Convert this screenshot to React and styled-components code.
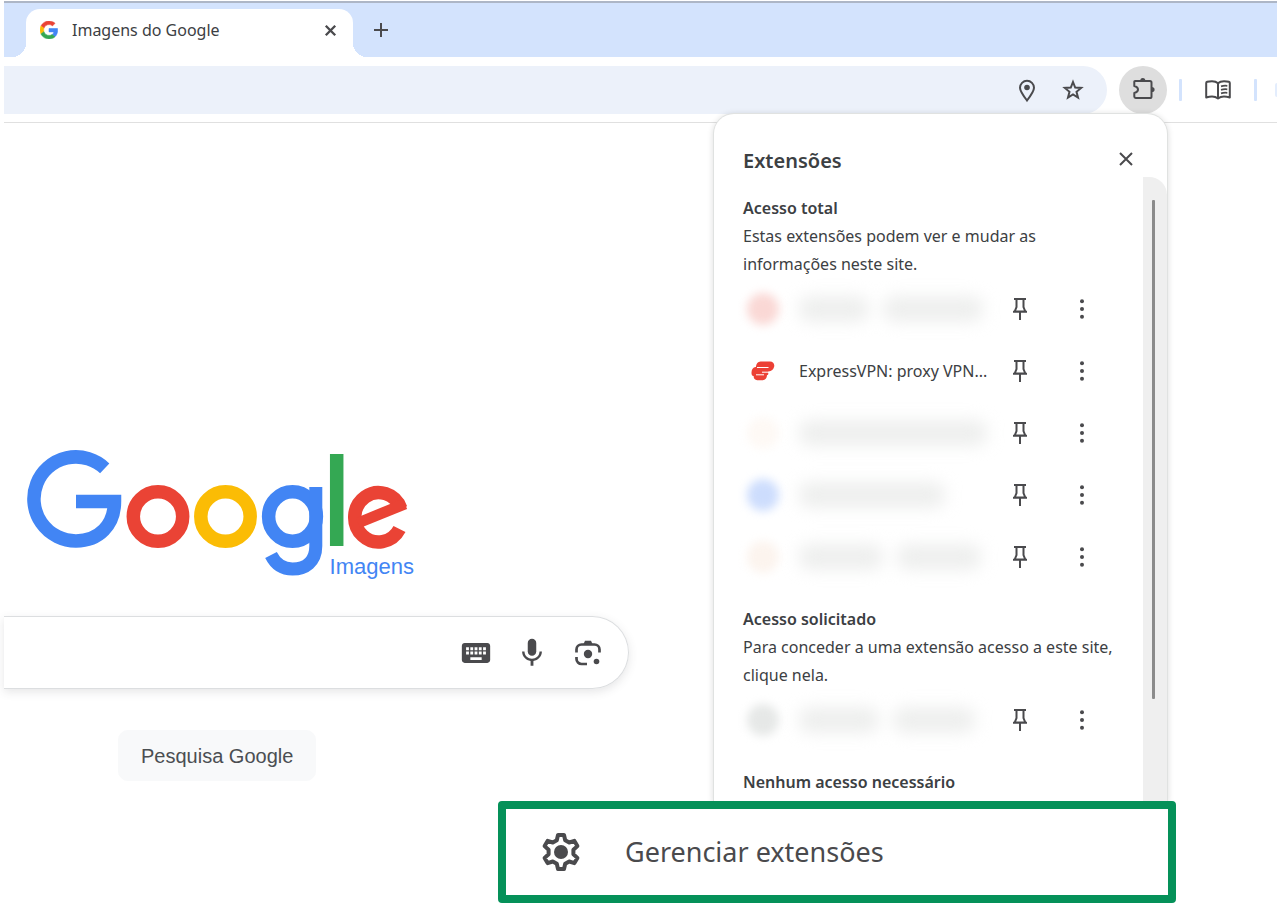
import React from "react";
import styled, { createGlobalStyle } from "styled-components";

const GlobalStyle = createGlobalStyle`
  *, *::before, *::after { box-sizing: border-box; }
  body {
    margin: 0;
    background: #fff;
    color: #3c4043;
    font-family: "Noto Sans", "Open Sans", sans-serif;
    font-size: 16px;
    line-height: 28px;
  }
  button, input { font: inherit; color: inherit; }
  h1, h2, p, ul { margin: 0; padding: 0; }
`;

const Browser = styled.div`
  min-height: 100vh;
  padding: 1px 4px 0;
`;

const TabStrip = styled.div`
  display: flex;
  align-items: center;
  height: 56px;
  padding: 6px 0 0 22px;
  border-top: 2px solid #adb6c6;
  background: #d3e3fd;
`;

const Tab = styled.div`
  position: relative;
  display: flex;
  align-items: center;
  gap: 14px;
  width: 327px;
  height: 48px;
  padding: 0 11px 6px 14px;
  border-radius: 14px 14px 0 0;
  background: #fff;

  &::before,
  &::after {
    content: "";
    position: absolute;
    bottom: 0;
    width: 14px;
    height: 14px;
  }
  &::before {
    right: 100%;
    background: radial-gradient(circle at 0 0, transparent 14px, #fff 14px);
  }
  &::after {
    left: 100%;
    background: radial-gradient(circle at 100% 0, transparent 14px, #fff 14px);
  }
`;

const TabTitle = styled.span`
  flex: 1;
  white-space: nowrap;
`;

const IconButton = styled.button`
  display: flex;
  flex: none;
  align-items: center;
  justify-content: center;
  width: ${(p) => p.$size || 24}px;
  height: ${(p) => p.$size || 24}px;
  padding: 0;
  border: 0;
  border-radius: 50%;
  background: ${(p) => (p.$active ? "#dedede" : "transparent")};
  color: #4a4a4d;

  svg { display: block; overflow: visible; }
`;

const NewTab = styled(IconButton)`
  margin: 0 0 6px 16px;
`;

const Toolbar = styled.div`
  display: flex;
  align-items: center;
  gap: 12px;
  height: 66px;
  padding-top: 1px;
  border-bottom: 1px solid #e0e0e0;
`;

const Omnibox = styled.div`
  display: flex;
  flex: 1;
  align-items: center;
  gap: 22px;
  height: 48px;
  padding-right: 22px;
  border-radius: 0 24px 24px 0;
  background: #ecf1fa;
`;

const BareInput = styled.input`
  flex: 1;
  min-width: 0;
  height: 40px;
  padding: 0 16px;
  border: 0;
  outline: 0;
  background: transparent;
`;

const Divider = styled.span`
  width: 3px;
  height: 22px;
  border-radius: 1px;
  background: #d3e3fd;
`;

const ProfileEdge = styled.span`
  width: 2px;
  height: 14px;
  margin-left: 6px;
  border-radius: 2px 0 0 2px;
  background: #e3edfd;
`;

const MenuAnchor = styled.div`
  position: relative;
`;

const Panel = styled.section`
  position: absolute;
  z-index: 2;
  top: 100%;
  right: 0;
  width: 453px;
  border-radius: 20px 20px 0 0;
  background: #fff;
  box-shadow: 0 0 0 1px #e0e2e1, 0 1px 6px 1px rgba(0, 0, 0, 0.14);
`;

const PanelHeader = styled.header`
  display: flex;
  align-items: flex-start;
  justify-content: space-between;
  height: 63px;
  padding: 33px 29px 0;
`;

const PanelTitle = styled.h1`
  font-size: 20px;
  font-weight: 600;
`;

const PanelBody = styled.div`
  display: flex;
`;

const Sections = styled.div`
  display: flex;
  flex: 1;
  flex-direction: column;
  gap: 17px;
  padding: 17px 29px 5px;
`;

const SectionTitle = styled.h2`
  font-size: 16px;
  font-weight: 600;
`;

const Description = styled.p`
  max-width: ${(p) => (p.$narrow ? "320px" : "none")};
`;

const Rows = styled.ul`
  list-style: none;
`;

const Row = styled.li`
  display: flex;
  align-items: center;
  height: 62px;
  padding: 0 8px;
`;

const RowName = styled.span`
  flex: 1;
  margin-left: 24px;
  white-space: nowrap;
`;

const RowActions = styled.div`
  display: flex;
  gap: 14px;
`;

const HiddenIcon = styled.span`
  width: 32px;
  height: 32px;
  margin: 0 -4px;
  border-radius: 50%;
  background: ${(p) => p.$color};
  filter: blur(5px);
`;

const HiddenName = styled.span`
  display: flex;
  flex: 1;
  gap: 14px;
  margin-left: 24px;
  filter: blur(8px);
`;

const HiddenWord = styled.span`
  width: ${(p) => p.$width}px;
  height: 26px;
  border-radius: 11px;
  background: #eeefee;
`;

const ScrollTrack = styled.div`
  width: 24px;
  padding: 23px 12px 0 9px;
  border-radius: 0 18px 0 0;
  background: #efefef;
`;

const ScrollThumb = styled.div`
  height: 499px;
  border-radius: 1px;
  background: #8b8b8b;
`;

const ManageButton = styled.button`
  position: absolute;
  top: 100%;
  right: -9px;
  display: flex;
  align-items: center;
  gap: 45px;
  width: 678px;
  height: 102px;
  padding: 0 36px;
  border: 8px solid #059159;
  border-radius: 4px;
  background: #fff;
  color: #4a4a4d;
  font-size: 27px;
  text-align: left;
`;

const Page = styled.main`
  display: flex;
  flex-direction: column;
  align-items: flex-start;
  max-width: 625px;
  padding-top: 327px;
`;

const Logo = styled.div`
  position: relative;
  margin-left: 22px;
  height: 130px;
  width: 388px;

  svg { display: block; overflow: visible; }
`;

const LogoCaption = styled.span`
  position: absolute;
  right: 0;
  bottom: 0;
  color: #4285f4;
  font: 22px/26px "Liberation Sans", Arial, sans-serif;
`;

const SearchBox = styled.form`
  display: flex;
  align-items: center;
  gap: 22px;
  width: 100%;
  height: 73px;
  margin-top: 36px;
  padding-right: 23px;
  border: 1px solid #dcdee0;
  border-left: 0;
  border-radius: 0 37px 37px 0;
  box-shadow: 0 3px 10px rgba(60, 64, 67, 0.13);
`;

const SearchButton = styled.button`
  height: 51px;
  margin: 41px 0 0 114px;
  padding: 0 22px;
  border: 1px solid #f8f9fa;
  border-radius: 10px;
  background: #f8f9fa;
  color: #4b4e52;
  font: 20px/24px "Liberation Sans", Arial, sans-serif;
`;

const stroke = (width) => ({
  fill: "none",
  stroke: "currentColor",
  strokeWidth: width,
});

const GoogleMark = () => (
  <svg width="18" height="18" viewBox="0 0 48 48" aria-hidden="true">
    <path fill="#EA4335" stroke="#EA4335" strokeWidth="1.5" d="M24 9.5c3.54 0 6.71 1.22 9.21 3.6l6.85-6.85C35.9 2.38 30.47 0 24 0 14.62 0 6.51 5.38 2.56 13.22l7.98 6.19C12.43 13.72 17.74 9.5 24 9.5z" />
    <path fill="#4285F4" stroke="#4285F4" strokeWidth="1.5" d="M46.98 24.55c0-1.57-.15-3.09-.38-4.55H24v9.02h12.94c-.58 2.96-2.26 5.48-4.78 7.18l7.73 6c4.51-4.18 7.09-10.36 7.09-17.65z" />
    <path fill="#FBBC05" stroke="#FBBC05" strokeWidth="1.5" d="M10.53 28.59c-.48-1.45-.76-2.99-.76-4.59s.27-3.14.76-4.59l-7.98-6.19C.92 16.46 0 20.12 0 24c0 3.88.92 7.54 2.56 10.78l7.97-6.19z" />
    <path fill="#34A853" stroke="#34A853" strokeWidth="1.5" d="M24 48c6.48 0 11.93-2.13 15.89-5.81l-7.73-6c-2.15 1.45-4.92 2.3-8.16 2.3-6.26 0-11.57-4.22-13.47-9.91l-7.98 6.19C6.51 42.62 14.62 48 24 48z" />
  </svg>
);

const CrossIcon = ({ size, width }) => (
  <svg width={size} height={size} viewBox="0 0 14 14" {...stroke(width)} aria-hidden="true">
    <path d="M1 1l12 12M13 1L1 13" />
  </svg>
);

const PlusIcon = () => (
  <svg width="14" height="14" viewBox="0 0 14 14" {...stroke(2)} aria-hidden="true">
    <path d="M7 0v14M0 7h14" />
  </svg>
);

const PlaceIcon = () => (
  <svg width="24" height="24" viewBox="0 0 24 24" {...stroke(2)} aria-hidden="true">
    <path d="M12 22.500C8.500 18 5 13.500 5 9.800a7 7 0 0 1 14 0C19 13.500 15.500 18 12 22.500z" />
    <circle cx="12" cy="9.500" r="2.800" fill="currentColor" stroke="none" />
  </svg>
);

const StarIcon = () => (
  <svg width="24" height="24" viewBox="0 0 24 24" {...stroke(2)} aria-hidden="true">
    <path d="M12 4l2.200 5.500 6 .4-4.700 3.900 1.500 5.800-5-3.200-5 3.200 1.500-5.800-4.700-3.900 6-.4z" />
  </svg>
);

const PuzzleIcon = () => (
  <svg width="24" height="24" viewBox="0 0 24 24" {...stroke(2)} aria-hidden="true">
    <path d="M4 3h14.900a1.600 1.600 0 0 1 1.600 1.600v13.800a1.600 1.600 0 0 1-1.600 1.600H4.700a1.400 1.400 0 0 1-1.400-1.400v-3.600c2.600-.6 3.700-1.800 3.700-3.500S5.900 8.600 3.300 8V3.700A.7.7 0 0 1 4 3z" strokeLinejoin="round" />
    <path d="M9.200 3a2.600 3 0 0 1 5.200 0zM20.600 8.900a3 2.600 0 0 1 0 5.200z" fill="currentColor" stroke="none" />
  </svg>
);

const ReaderIcon = () => (
  <svg width="26" height="20" viewBox="0 0 26 20" {...stroke(2)} aria-hidden="true">
    <path d="M13 3.200C11.500 1.800 9.500 1.200 7 1.200c-2 0-3.500.1-4.800.5-.7.200-1 .6-1 1.300v14.500C3 17 5 16.600 7 16.600c2.300 0 4.300.6 6 1.900 1.700-1.300 3.700-1.900 6-1.900 2 0 4 .4 5.800.9V3c0-.7-.3-1.100-1-1.300-1.300-.4-2.800-.5-4.800-.5-2.500 0-4.500.6-6 2z" strokeLinejoin="round" />
    <path d="M13 3v15" />
    <path d="M16 6.300c2-.6 4-.7 6.300-.5M16 9.800c2-.6 4-.7 6.300-.5M16 13.300c2-.6 4-.7 6.300-.5" strokeWidth="1.800" />
  </svg>
);

const PinIcon = () => (
  <svg width="14" height="22" viewBox="0 0 14 22" {...stroke(2)} aria-hidden="true">
    <path d="M1 1h12M3.500 1v8L1.700 13.500h10.600L10.500 9V1M0 13.800h14M7 13.500v8.500" />
  </svg>
);

const DotsIcon = () => (
  <svg width="6" height="20" viewBox="0 0 6 20" fill="currentColor" aria-hidden="true">
    <circle cx="3" cy="2.300" r="2" />
    <circle cx="3" cy="10" r="2" />
    <circle cx="3" cy="17.700" r="2" />
  </svg>
);

const ExpressIcon = () => (
  <svg width="24" height="24" viewBox="0 0 24 24" aria-hidden="true">
    <path fill="#ec4035" d="M9.500 2.500h9.500c3 0 4.700 2.200 4.200 5-.6 2.900-2.700 4.900-5.700 4.900l-.6 1.900h.6c-.2 1.300-.6 2-1.600 2h.1c-.1 2.800-1.700 4.900-4.300 4.900H6.200c-2.500 0-3.800-1.700-3.500-4.300h-.2c-1.600-.2-2-1.600-2-3C.4 10.500 2 8.200 4.600 8h.3c.3-3.300 1.900-5.500 4.600-5.500z" />
    <path d="M6 8.500h11.500M5 15.800h8M11 13.200h7" stroke="#fff" strokeWidth="1" />
  </svg>
);

const KeyboardIcon = () => (
  <svg width="34" height="34" viewBox="0 0 24 24" fill="currentColor" aria-hidden="true">
    <path d="M20 5H4c-1.100 0-1.990.9-1.990 2L2 17c0 1.100.9 2 2 2h16c1.100 0 2-.9 2-2V7c0-1.100-.9-2-2-2zm-9 3h2v2h-2V8zm0 3h2v2h-2v-2zM8 8h2v2H8V8zm0 3h2v2H8v-2zm-1 2H5v-2h2v2zm0-3H5V8h2v2zm9 7H8v-2h8v2zm0-4h-2v-2h2v2zm0-3h-2V8h2v2zm3 3h-2v-2h2v2zm0-3h-2V8h2v2z" />
  </svg>
);

const MicIcon = () => (
  <svg width="34" height="34" viewBox="0 0 24 24" fill="currentColor" aria-hidden="true">
    <path d="M12 14c1.660 0 3-1.340 3-3V5c0-1.660-1.340-3-3-3S9 3.340 9 5v6c0 1.660 1.340 3 3 3z" />
    <path d="M17.300 11c0 3-2.540 5.100-5.300 5.100S6.700 14 6.700 11H5c0 3.410 2.720 6.230 6 6.720V21h2v-3.280c3.280-.48 6-3.300 6-6.720h-1.700z" />
  </svg>
);

const LensIcon = () => (
  <svg width="26" height="26" viewBox="0 0 26 26" {...stroke(2.7)} aria-hidden="true">
    <path d="M1.500 12.500V9.500a5 5 0 0 1 5-5h13a5 5 0 0 1 5 5v3M1.500 17v2a5 5 0 0 0 5 5H12" />
    <path d="M8.500 4l1.500-3.300h6L17.500 4z" fill="currentColor" stroke="none" />
    <circle cx="13" cy="14" r="4.200" fill="currentColor" stroke="none" />
    <circle cx="21.500" cy="21.500" r="2.800" fill="currentColor" stroke="none" />
  </svg>
);

const GearIcon = () => (
  <svg width="38" height="40" viewBox="0 0 38 40" {...stroke(4)} strokeLinejoin="round" aria-hidden="true">
    <path d="M16 3h6l1.200 5.200 4 2.300 5.200-1.600 3 5.200-4 3.700v4.400l4 3.700-3 5.200-5.200-1.600-4 2.300L22 37h-6l-1.200-5.200-4-2.300-5.200 1.600-3-5.200 4-3.700v-4.400l-4-3.700 3-5.200 5.200 1.600 4-2.300z" />
    <circle cx="19" cy="20" r="7" fill="currentColor" stroke="none" />
  </svg>
);

const Wordmark = () => (
  <svg width="382" height="127" viewBox="0 0 382 127" fill="none" strokeWidth="13.500" role="img" aria-label="Google">
    <path d="M78.700 18.300A42 42 0 1 0 50 90.900C73 90.900 88.500 75 88.500 51.500H50" stroke="#4285f4" strokeLinejoin="miter" />
    <circle cx="132" cy="66.500" r="24.700" stroke="#ea4335" />
    <circle cx="199.500" cy="66.500" r="24.700" stroke="#fbbc05" />
    <ellipse cx="266.500" cy="66.500" rx="23.900" ry="24.700" stroke="#4285f4" />
    <path d="M289.800 37V96C289.800 112 279 119 266.500 119C256 119 249 113 245 105" stroke="#4285f4" strokeWidth="13" />
    <path d="M310.700 4v92" stroke="#34a853" />
    <path d="M373.500 79A23.800 24.700 0 1 1 374.800 58.500" stroke="#ea4335" />
    <path d="M332 73L379 53.800" stroke="#ea4335" strokeWidth="11" />
  </svg>
);

const fullAccess = [
  { color: "#fad8d5", words: [70, 100] },
  { name: "ExpressVPN: proxy VPN..." },
  { color: "#fef9f5", words: [188] },
  { color: "#cdddfd", words: [146] },
  { color: "#fcf4ee", words: [84, 84] },
];

const requestedAccess = [{ color: "#e6e8e7", words: [80, 82] }];

function ExtensionRow({ name, color, words }) {
  return (
    <Row>
      {name ? <ExpressIcon /> : <HiddenIcon $color={color} />}
      {name ? (
        <RowName>{name}</RowName>
      ) : (
        <HiddenName>
          {words.map((width, i) => (
            <HiddenWord key={i} $width={width} />
          ))}
        </HiddenName>
      )}
      <RowActions>
        <IconButton $size={48} aria-label="Fixar"><PinIcon /></IconButton>
        <IconButton $size={48} aria-label="Mais opções"><DotsIcon /></IconButton>
      </RowActions>
    </Row>
  );
}

function ExtensionsPanel() {
  return (
    <Panel aria-label="Extensões">
      <PanelHeader>
        <PanelTitle>Extensões</PanelTitle>
        <IconButton aria-label="Fechar"><CrossIcon size={14} width={2} /></IconButton>
      </PanelHeader>
      <PanelBody>
        <Sections>
          <div>
            <SectionTitle>Acesso total</SectionTitle>
            <Description $narrow>Estas extensões podem ver e mudar as informações neste site.</Description>
            <Rows>
              {fullAccess.map((item, i) => <ExtensionRow key={i} {...item} />)}
            </Rows>
          </div>
          <div>
            <SectionTitle>Acesso solicitado</SectionTitle>
            <Description>Para conceder a uma extensão acesso a este site, clique nela.</Description>
            <Rows>
              {requestedAccess.map((item, i) => <ExtensionRow key={i} {...item} />)}
            </Rows>
          </div>
          <SectionTitle>Nenhum acesso necessário</SectionTitle>
        </Sections>
        <ScrollTrack><ScrollThumb /></ScrollTrack>
      </PanelBody>
      <ManageButton>
        <GearIcon />
        Gerenciar extensões
      </ManageButton>
    </Panel>
  );
}

export default function App() {
  return (
    <Browser>
      <GlobalStyle />
      <TabStrip>
        <Tab>
          <GoogleMark />
          <TabTitle>Imagens do Google</TabTitle>
          <IconButton aria-label="Fechar guia"><CrossIcon size={11} width={3} /></IconButton>
        </Tab>
        <NewTab aria-label="Nova guia"><PlusIcon /></NewTab>
      </TabStrip>
      <Toolbar>
        <Omnibox>
          <BareInput aria-label="Barra de endereço" />
          <IconButton aria-label="Local"><PlaceIcon /></IconButton>
          <IconButton aria-label="Adicionar aos favoritos"><StarIcon /></IconButton>
        </Omnibox>
        <MenuAnchor>
          <IconButton $size={48} $active aria-label="Extensões"><PuzzleIcon /></IconButton>
          <ExtensionsPanel />
        </MenuAnchor>
        <Divider />
        <IconButton $size={48} aria-label="Modo de leitura"><ReaderIcon /></IconButton>
        <Divider />
        <ProfileEdge />
      </Toolbar>
      <Page>
        <Logo>
          <Wordmark />
          <LogoCaption>Imagens</LogoCaption>
        </Logo>
        <SearchBox>
          <BareInput aria-label="Pesquisar" />
          <IconButton type="button" $size={34} aria-label="Teclado virtual"><KeyboardIcon /></IconButton>
          <IconButton type="button" $size={34} aria-label="Pesquisa por voz"><MicIcon /></IconButton>
          <IconButton type="button" $size={34} aria-label="Pesquisa por imagem"><LensIcon /></IconButton>
        </SearchBox>
        <SearchButton>Pesquisa Google</SearchButton>
      </Page>
    </Browser>
  );
}
